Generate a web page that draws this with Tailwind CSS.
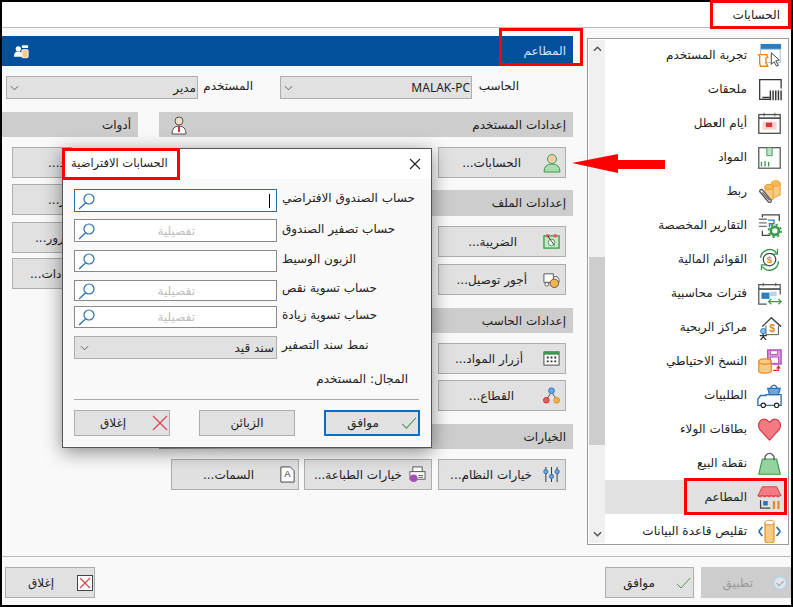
<!DOCTYPE html>
<html lang="ar" dir="rtl">
<head>
  <meta charset="UTF-8" />
  <title>الحسابات</title>
  <script src="https://cdn.jsdelivr.net/npm/@tailwindcss/browser@4"></script>
</head>
<body class="m-0 bg-black font-['DejaVu_Sans','Noto_Sans',sans-serif] text-[12px] text-[#222]">
<div class="relative w-[793px] h-[607px] overflow-hidden bg-black p-[2px]">
  <div class="relative flex flex-col h-full bg-[#f9f9f9]">

    <!-- Titlebar -->
    <div class="h-[26px] bg-white border-b border-[#bbb] flex items-center pr-[11px]">الحسابات</div>

    <div class="flex flex-1 gap-[14px] pt-[9px]">
      <!-- Sidebar -->
      <div class="w-[202px] h-[507px] mt-[1px] mr-[2px] border border-[#9a9a9a] bg-white flex p-[1px]">
        <div class="flex-1 overflow-hidden">
          <div class="flex flex-col -mt-[2px] [&>div]:shrink-0">
            <div class="h-[34px] flex items-center pr-[5px] gap-[10px]"><svg viewBox="0 0 28 28" class="w-[25px] h-[25px]"><rect x="4" y="1" width="23" height="6" fill="#2a7fc4"/><rect x="4" y="7" width="22" height="15" fill="#fff" stroke="#9bbbd8"/><path d="M2 13h9l1 3-2 1v5l2 4H4l-1-3V15z" fill="#fff" stroke="#e2882c" stroke-width="1.600"/><path d="M16 11l0 13 3-3 3 5 2-1-3-5 4-1z" fill="#fff" stroke="#333"/></svg><span>تجربة المستخدم</span></div>
            <div class="h-[34px] flex items-center pr-[5px] gap-[10px]"><svg viewBox="0 0 28 28" class="w-[25px] h-[25px]"><path d="M27 13V3H3v22h12" fill="none" stroke="#333" stroke-width="1.400"/><path d="M6 23h8M15 15v11m3-11v11m3-11v11m3-11v11m3-11v11" stroke="#333" stroke-width="1.600"/></svg><span>ملحقات</span></div>
            <div class="h-[34px] flex items-center pr-[5px] gap-[10px]"><svg viewBox="0 0 28 28" class="w-[25px] h-[25px]"><rect x="2" y="4" width="24" height="21" fill="#fff" stroke="#555" stroke-width="1.500"/><path d="M2 8h24" stroke="#555" stroke-width="2"/><path d="M8 2v4m12-4v4" stroke="#555"/><rect x="6" y="12" width="16" height="9" fill="#f4d5d5"/><rect x="10" y="13" width="7" height="5" fill="#d33"/></svg><span>أيام العطل</span></div>
            <div class="h-[34px] flex items-center pr-[5px] gap-[10px]"><svg viewBox="0 0 28 28" class="w-[25px] h-[25px]"><rect x="2" y="3" width="24" height="23" fill="#fff" stroke="#555" stroke-width="1.400"/><path d="M11 3h6v9h-6z" fill="#bfe3c3" stroke="#3b9a52"/><path d="M5 24v-5m4 5v-6m4 6v-5" stroke="#3b9a52" stroke-width="1.500"/></svg><span>المواد</span></div>
            <div class="h-[34px] flex items-center pr-[5px] gap-[10px]"><svg viewBox="0 0 28 28" class="w-[25px] h-[25px]"><path d="M17 5v17l9-4V5z" fill="#f8cb85" stroke="#e99a2c"/><ellipse cx="21" cy="5" rx="5" ry="3" fill="#f6b95c" stroke="#e99a2c"/><path d="M9 9v14h9V9z" fill="#f8cb85" stroke="#e99a2c"/><ellipse cx="13.500" cy="9" rx="5" ry="3" fill="#f6b95c" stroke="#e99a2c"/><path d="M3 14l10 12q3 1 3-2L6 12q-3-1-3 2z" fill="#fff" stroke="#555" stroke-width="1.500"/><path d="M6 15l8 9" stroke="#555" stroke-width="1.300"/></svg><span>ربط</span></div>
            <div class="h-[34px] flex items-center pr-[5px] gap-[10px]"><svg viewBox="0 0 28 28" class="w-[25px] h-[25px]"><path d="M25 9V2H6v3M6 20v5h9" fill="none" stroke="#444" stroke-width="1.400"/><path d="M2 7h9M2 11h9M2 15h9" stroke="#777" stroke-width="1.500"/><path d="M12 8h7v4h-5v4" fill="none" stroke="#2a7fc4" stroke-width="1.500"/><circle cx="20" cy="20" r="4.500" fill="none" stroke="#3d9a4e" stroke-width="3"/><circle cx="20" cy="20" r="7" fill="none" stroke="#3d9a4e" stroke-width="2" stroke-dasharray="2.500 3"/></svg><span>التقارير المخصصة</span></div>
            <div class="h-[34px] flex items-center pr-[5px] gap-[10px]"><svg viewBox="0 0 28 28" class="w-[25px] h-[25px]"><path d="M4 12a10 10 0 0 1 18-5M24 16A10 10 0 0 1 6 22" fill="none" stroke="#3d9a4e" stroke-width="1.600"/><path d="M23 2v6h-6M5 26v-6h6" fill="none" stroke="#3d9a4e" stroke-width="1.400"/><circle cx="14" cy="14" r="7" fill="#fff" stroke="#444" stroke-width="1.400"/><text x="14" y="18" text-anchor="middle" font-size="11" font-weight="bold" fill="#e2882c" font-family="Liberation Sans">$</text></svg><span>القوائم المالية</span></div>
            <div class="h-[34px] flex items-center pr-[5px] gap-[10px]"><svg viewBox="0 0 28 28" class="w-[25px] h-[25px]"><path d="M26 15V4H2v22h9" fill="none" stroke="#555" stroke-width="1.400"/><path d="M2 9h24" stroke="#555" stroke-width="2"/><path d="M7 2v4m14-4v4" stroke="#555"/><rect x="5" y="13" width="9" height="7" fill="#2a7fc4"/><rect x="14" y="12" width="8" height="5" fill="#b9d3ea"/><path d="M13 23h14m-11-3-3 3 3 3m8-6 3 3-3 3" fill="none" stroke="#3d9a4e" stroke-width="1.400"/></svg><span>فترات محاسبية</span></div>
            <div class="h-[34px] flex items-center pr-[5px] gap-[10px]"><svg viewBox="0 0 28 28" class="w-[25px] h-[25px]"><path d="M6 13L16 3l11 10" fill="none" stroke="#444" stroke-width="1.600"/><path d="M10 12v10h14V12" fill="#fff" stroke="#444"/><text x="17" y="19" text-anchor="middle" font-size="12" font-weight="bold" fill="#e2882c" font-family="Liberation Sans">$</text><circle cx="7" cy="18" r="3" fill="#8cbfe6" stroke="#2a7fc4"/><path d="M7 21v3l-3 4m3-4 3 4M3 23h8" stroke="#333" stroke-width="1.400" fill="none"/></svg><span>مراكز الربحية</span></div>
            <div class="h-[34px] flex items-center pr-[5px] gap-[10px]"><svg viewBox="0 0 28 28" class="w-[25px] h-[25px]"><path d="M12 1h15v16H12z" fill="#d99ae0" stroke="#b04dbb" stroke-width="1.500"/><rect x="15" y="2" width="8" height="4" fill="#fff" stroke="#b04dbb"/><rect x="15" y="9" width="9" height="7" fill="#fff" stroke="#b04dbb"/><path d="M2 14v11q0 2 7 2t7-2V14" fill="#f8cb85" stroke="#e08a1e" stroke-width="1.300"/><ellipse cx="9" cy="14" rx="7" ry="3" fill="#f8cb85" stroke="#e08a1e" stroke-width="1.300"/><path d="M18 24h6v-4m-2 2 2-3 2 3" fill="none" stroke="#d33" stroke-width="1.300"/></svg><span>النسخ الاحتياطي</span></div>
            <div class="h-[34px] flex items-center pr-[5px] gap-[10px]"><svg viewBox="0 0 28 28" class="w-[25px] h-[25px]"><path d="M1 25v-7l3-4h6v-1h17v12z" fill="#fff" stroke="#2a6fb0" stroke-width="1.500"/><circle cx="7" cy="25" r="2.500" fill="#fff" stroke="#222" stroke-width="1.300"/><circle cx="22" cy="25" r="2.500" fill="#fff" stroke="#222" stroke-width="1.300"/><path d="M12 6h14l-2 7H14z" fill="#6aa9e0" stroke="#2a6fb0" stroke-width="1.400"/><path d="M15 6q4-7 8 0" fill="none" stroke="#2a6fb0" stroke-width="1.400"/></svg><span>الطلبيات</span></div>
            <div class="h-[34px] flex items-center pr-[5px] gap-[10px]"><svg viewBox="0 0 28 28" class="w-[25px] h-[25px]"><path d="M14 26L3 14Q0 8 4 4q5-4 10 2 5-6 10-2 4 4 1 10z" fill="#f47a82" stroke="#cf3b45" stroke-width="1.300"/></svg><span>بطاقات الولاء</span></div>
            <div class="h-[34px] flex items-center pr-[5px] gap-[10px]"><svg viewBox="0 0 28 28" class="w-[25px] h-[25px]"><path d="M6 9h16l4 17H2z" fill="#93d39f" stroke="#3d9a4e" stroke-width="1.300"/><path d="M9 10V6q5-7 10 0v4" fill="none" stroke="#444" stroke-width="1.300"/></svg><span>نقطة البيع</span></div>
            <div class="h-[34px] flex items-center pr-[5px] gap-[10px] bg-[#e1e1e1]"><svg viewBox="0 0 28 28" class="w-[25px] h-[25px]"><path d="M6 2h16l5 10H1z" fill="#f47a82" stroke="#cf3b45"/><path d="M1 12q3 3 5 0 3 3 5 0 3 3 5 0 3 3 5 0 3 3 5 0" fill="#f47a82" stroke="#cf3b45"/><path d="M4 17v9h11" fill="none" stroke="#444" stroke-width="1.400"/><rect x="7" y="18" width="5" height="5" fill="#2a6fb0"/><path d="M19 18v9m5-9v9" stroke="#e2882c" stroke-width="2.400"/></svg><span>المطاعم</span></div>
            <div class="h-[34px] flex items-center pr-[5px] gap-[10px]"><svg viewBox="0 0 28 28" class="w-[25px] h-[25px]"><path d="M2 14l4-5m-4 5 4 5M26 14l-4-5m4 5-4 5" fill="none" stroke="#2a6fb0" stroke-width="2"/><path d="M9 4v20q0 3 5 3t5-3V4" fill="#f8cb85" stroke="#e08a1e" stroke-width="1.300"/><ellipse cx="14" cy="4" rx="5" ry="2.500" fill="#fff" stroke="#e08a1e"/></svg><span>تقليص قاعدة البيانات</span></div>
          </div>
        </div>
        <!-- Scrollbar -->
        <div class="w-[16px] bg-[#f0f0f0] flex flex-col items-center justify-between relative">
          <svg viewBox="0 0 10 6" class="w-[9px] h-[6px] mt-[6px]"><path d="M1 5l4-4 4 4" fill="none" stroke="#555" stroke-width="1.600"/></svg>
          <div class="absolute top-[217px] left-0 w-[16px] h-[188px] bg-[#cdcdcd]"></div>
          <svg viewBox="0 0 10 6" class="w-[9px] h-[6px] mb-[6px]"><path d="M1 1l4 4 4-4" fill="none" stroke="#555" stroke-width="1.600"/></svg>
        </div>
      </div>

      <!-- Main panel -->
      <div class="w-[571px] flex flex-col">
        <div class="h-[30px] bg-[#02509b] flex items-center justify-between pr-[7px] pl-[11px] -mt-[1px] text-[#cfe6fb]">
          <span>المطاعم</span>
          <svg viewBox="0 0 18 16" class="w-[16px] h-[15px]"><circle cx="6" cy="5" r="3" fill="#fff"/><path d="M1 14q0-6 5-6t5 6z" fill="#fff"/><rect x="10" y="1" width="7" height="3" fill="#fff"/><rect x="10" y="6" width="7" height="9" rx="1" fill="#f8cb85" stroke="#fff"/></svg>
        </div>

        <div class="flex items-center h-[23px] mt-[10px] pr-[54px]">
          <span class="w-[47px] mb-[3px]">الحاسب</span>
          <div class="w-[192px] h-[23px] bg-[#e1e1e1] border border-[#adadad] flex items-center justify-between pr-[1px] pl-[3px] font-['Noto_Sans']"><span>MALAK-PC</span><svg viewBox="0 0 10 6" class="w-[9px] h-[6px]"><path d="M1 1l4 4 4-4" fill="none" stroke="#555"/></svg></div>
          <span class="w-[48px] mr-[27px] mb-[3px] whitespace-nowrap">المستخدم</span>
          <div class="w-[192px] h-[23px] mr-[7px] bg-[#e1e1e1] border border-[#adadad] flex items-center justify-between pr-[1px] pl-[3px]"><span>مدير</span><svg viewBox="0 0 10 6" class="w-[9px] h-[6px]"><path d="M1 1l4 4 4-4" fill="none" stroke="#555"/></svg></div>
        </div>

        <div class="flex mt-[13px] h-[25px] gap-[21px]">
          <div class="w-[414px] bg-[#cdcdcd] flex items-center justify-between pr-[7px] pl-[11px]"><span>إعدادات المستخدم</span><svg viewBox="0 0 18 20" class="w-[18px] h-[20px]"><circle cx="9" cy="6" r="4" fill="#f6dcc6" stroke="#555"/><path d="M2 19q0-8 7-8t7 8z" fill="#fff" stroke="#555"/><path d="M9 11v6" stroke="#c33" stroke-width="2"/></svg></div>
          <div class="w-[136px] bg-[#cdcdcd] flex items-center pr-[7px]">أدوات</div>
        </div>

        <div class="flex gap-[6px] mt-[10px] pr-[7px]">
          <button class="w-[128px] h-[31px] shrink-0 bg-[#e1e1e1] border border-[#adadad] flex items-center pr-[4px]"><svg viewBox="0 0 18 20" class="w-[18px] h-[20px]"><circle cx="9" cy="6" r="4.500" fill="#f5cda8" stroke="#3d9a4e"/><path d="M1 19q0-8 8-8t8 8z" fill="#a9dcae" stroke="#3d9a4e"/></svg><span class="mr-[22px]">الحسابات...</span></button>
        </div>

        <div class="mt-[12px] h-[26px] w-[414px] bg-gradient-to-l from-[#cdcdcd] from-80% to-[#9a9a9a] flex items-center pr-[7px]">إعدادات الملف</div>
        <div class="flex flex-col gap-[7px] mt-[10px] pr-[7px]">
          <button class="w-[128px] h-[31px] bg-[#e1e1e1] border border-[#adadad] flex items-center pr-[5px]"><svg viewBox="0 0 18 18" class="w-[17px] h-[17px]"><rect x="1" y="3" width="16" height="13" fill="#c4e8c8" stroke="#3d9a4e" stroke-width="1.400"/><circle cx="9" cy="10" r="3.500" fill="#fff" stroke="#3d9a4e"/><circle cx="5" cy="3" r="2" fill="#e85a64"/><circle cx="13" cy="3" r="2" fill="#e85a64"/><path d="M5 3l7 10" stroke="#333"/></svg><span class="mr-[26px]">الضريبة...</span></button>
          <button class="w-[128px] h-[31px] bg-[#e1e1e1] border border-[#adadad] flex items-center pr-[5px]"><svg viewBox="0 0 18 18" class="w-[17px] h-[17px]"><path d="M1 3h10v9H1zM11 6h4l2 3v3h-6" fill="#fff" stroke="#555"/><circle cx="12" cy="13" r="4.500" fill="#f8b34a" stroke="#555"/><circle cx="4" cy="14" r="2" fill="#fff" stroke="#555"/></svg><span class="mr-[16px]">أجور توصيل...</span></button>
        </div>

        <div class="mt-[13px] h-[25px] w-[414px] bg-gradient-to-l from-[#cdcdcd] from-80% to-[#9a9a9a] flex items-center pr-[7px]">إعدادات الحاسب</div>
        <div class="flex flex-col gap-[6px] mt-[10px] pr-[7px]">
          <button class="w-[128px] h-[31px] bg-[#e1e1e1] border border-[#adadad] flex items-center pr-[5px]"><svg viewBox="0 0 18 18" class="w-[17px] h-[17px]"><rect x="1" y="2" width="16" height="14" fill="#fff" stroke="#444"/><rect x="1" y="2" width="16" height="3" fill="#3d9a4e"/><path d="M4 8h2m2 0h2m2 0h2M4 12h2m2 0h2m2 0h2" stroke="#333" stroke-width="2"/></svg><span class="mr-[20px]">أزرار المواد...</span></button>
          <button class="w-[128px] h-[31px] bg-[#e1e1e1] border border-[#adadad] flex items-center pr-[5px]"><svg viewBox="0 0 18 18" class="w-[17px] h-[17px]"><path d="M9 5L4 13m5-8 5 8" stroke="#555"/><circle cx="9" cy="4" r="3" fill="#6aa9e0" stroke="#2a6fb0"/><circle cx="3.500" cy="14" r="3" fill="#e85a64" stroke="#c33"/><circle cx="14.500" cy="14" r="3" fill="#f8b34a" stroke="#d48a1e"/></svg><span class="mr-[29px]">القطاع...</span></button>
        </div>

        <div class="mt-[13px] h-[25px] w-[414px] bg-gradient-to-l from-[#cdcdcd] from-80% to-[#9a9a9a] flex items-center pr-[7px]">الخيارات</div>
        <div class="flex gap-[6px] mt-[10px] pr-[7px]">
          <button class="w-[128px] h-[31px] bg-[#e1e1e1] border border-[#adadad] flex items-center pr-[5px]"><svg viewBox="0 0 18 18" class="w-[17px] h-[17px]"><path d="M3 1v16M9 1v16M15 1v16" stroke="#333"/><circle cx="3" cy="6" r="2.200" fill="#6aa9e0" stroke="#2a6fb0"/><circle cx="9" cy="11" r="2.200" fill="#6aa9e0" stroke="#2a6fb0"/><circle cx="15" cy="6" r="2.200" fill="#6aa9e0" stroke="#2a6fb0"/></svg><span class="mr-[11px]">خيارات النظام...</span></button>
          <button class="w-[128px] h-[31px] bg-[#e1e1e1] border border-[#adadad] flex items-center pr-[5px]"><svg viewBox="0 0 18 18" class="w-[17px] h-[17px]"><rect x="4" y="1" width="10" height="5" fill="#fff" stroke="#555"/><rect x="1" y="6" width="16" height="8" fill="#fff" stroke="#555"/><circle cx="5" cy="13" r="4" fill="#a44fb5"/><path d="M10 10h5m-5 2h5" stroke="#555"/></svg><span class="mr-[7px]">خيارات الطباعة...</span></button>
          <button class="w-[128px] h-[31px] -mr-[1px] bg-[#e1e1e1] border border-[#adadad] flex items-center pr-[2px]"><svg viewBox="0 0 18 18" class="w-[17px] h-[17px]"><path d="M2 1h10l4 4v12H2z" fill="#fff" stroke="#444"/><text x="9" y="12" text-anchor="middle" font-size="10" fill="#333" font-family="Liberation Sans">A</text></svg><span class="mr-[25px]">السمات...</span></button>
        </div>
      </div>
    </div>

    <!-- Footer -->
    <div class="h-[49px] pt-[3px] border-t border-[#bbb] flex items-center gap-[7px] pl-[3px]">
      <button class="w-[90px] h-[31px] bg-[#cdcdcd] text-[#999] flex items-center pr-[3px] gap-[19px]"><svg viewBox="0 0 18 18" class="w-[16px] h-[16px]"><circle cx="9" cy="9" r="7.500" fill="#dfe6ec" stroke="#bcd0e0" stroke-width="2"/><path d="M5 9l3 3 5-5" fill="none" stroke="#aab" stroke-width="1.400"/></svg><span>تطبيق</span></button>
      <button class="w-[89px] h-[31px] bg-[#e1e1e1] border border-[#adadad] flex items-center pr-[2px] gap-[21px]"><svg viewBox="0 0 18 14" class="w-[15px] h-[12px]"><path d="M1 8l5 5L17 1" fill="none" stroke="#4d9a5a" stroke-width="1.200"/></svg><span>موافق</span></button>
      <button class="w-[90px] h-[31px] bg-[#e1e1e1] border border-[#adadad] flex items-center pr-[1px] gap-[23px] mr-auto"><svg viewBox="0 0 16 16" class="w-[16px] h-[16px]"><rect x="0.500" y="0.500" width="15" height="15" fill="#fff" stroke="#444"/><path d="M3 3l10 10M13 3L3 13" stroke="#d9434e" stroke-width="1.200"/></svg><span>إغلاق</span></button>
    </div>
  </div>

  <!-- Partially hidden left-column buttons -->
  <div class="absolute left-[12px] top-[147px] flex flex-col">
    <button class="w-[60px] h-[31px] bg-[#e1e1e1] border border-[#adadad] text-left pl-[35px]">د...</button>
    <button class="w-[60px] h-[31px] mt-[6px] bg-[#e1e1e1] border border-[#adadad] text-left pl-[35px]">ر...</button>
    <button class="w-[60px] h-[31px] mt-[7px] bg-[#e1e1e1] border border-[#adadad] text-left pl-[22px]">رور...</button>
    <button class="w-[60px] h-[31px] mt-[5px] bg-[#e1e1e1] border border-[#adadad] text-left pl-[17px]">ادات...</button>
  </div>

  <!-- Dialog -->
  <div class="absolute left-[62px] top-[148px] w-[370px] h-[300px] bg-[#f9f9f9] border border-[#555] shadow-[0_4px_18px_rgba(0,0,0,0.45)] flex flex-col">
    <div class="h-[30px] bg-white flex items-center justify-between pr-[10px] pl-[8px] shrink-0">
      <svg viewBox="0 0 12 12" class="w-[12px] h-[12px]"><path d="M1 1l10 10M11 1L1 11" stroke="#222" stroke-width="1.100"/></svg>
      <span class="text-[11.5px]">الحسابات الافتراضية</span>
    </div>
    <div class="flex flex-col pt-[10px] pr-[10px] pl-[11px]">
      <div class="flex items-center gap-[5px] h-[23px]">
        <span class="flex-1 text-left whitespace-nowrap mb-[5px]">حساب الصندوق الافتراضي</span>
        <div class="w-[203px] h-[23px] bg-white border border-[#2a6fa8] flex items-center justify-between pr-[6px] pl-[3px]"><span class="w-[1px] h-[14px] bg-black"></span><svg viewBox="0 0 18 18" class="w-[18px] h-[18px]"><circle cx="11" cy="7" r="5" fill="none" stroke="#2a6fb0" stroke-width="1.200"/><path d="M7.500 11L1 17" stroke="#2a6fb0" stroke-width="1.200"/></svg></div>
      </div>
      <div class="flex items-center gap-[5px] h-[23px] mt-[7px]">
        <span class="flex-1 text-left whitespace-nowrap mb-[4px]">حساب تصفير الصندوق</span>
        <div class="w-[203px] h-[23px] bg-white border border-[#8a8a8a] flex items-center justify-end relative pl-[3px]"><span class="absolute right-[81px] text-[#bdbdbd]">تفصيلية</span><svg viewBox="0 0 18 18" class="w-[18px] h-[18px]"><circle cx="11" cy="7" r="5" fill="none" stroke="#2a6fb0" stroke-width="1.200"/><path d="M7.500 11L1 17" stroke="#2a6fb0" stroke-width="1.200"/></svg></div>
      </div>
      <div class="flex items-center gap-[5px] h-[22px] mt-[8px]">
        <span class="flex-1 text-left whitespace-nowrap mb-[4px]">الزبون الوسيط</span>
        <div class="w-[203px] h-[22px] bg-white border border-[#8a8a8a] flex items-center justify-end pl-[3px]"><svg viewBox="0 0 18 18" class="w-[18px] h-[18px]"><circle cx="11" cy="7" r="5" fill="none" stroke="#2a6fb0" stroke-width="1.200"/><path d="M7.500 11L1 17" stroke="#2a6fb0" stroke-width="1.200"/></svg></div>
      </div>
      <div class="flex items-center gap-[5px] h-[21px] mt-[8px]">
        <span class="flex-1 text-left whitespace-nowrap mb-[5px]">حساب تسوية نقص</span>
        <div class="w-[203px] h-[21px] bg-white border border-[#8a8a8a] flex items-center justify-end relative pl-[3px]"><span class="absolute right-[81px] text-[#bdbdbd]">تفصيلية</span><svg viewBox="0 0 18 18" class="w-[18px] h-[18px]"><circle cx="11" cy="7" r="5" fill="none" stroke="#2a6fb0" stroke-width="1.200"/><path d="M7.500 11L1 17" stroke="#2a6fb0" stroke-width="1.200"/></svg></div>
      </div>
      <div class="flex items-center gap-[5px] h-[22px] mt-[5px]">
        <span class="flex-1 text-left whitespace-nowrap mb-[5px]">حساب تسوية زيادة</span>
        <div class="w-[203px] h-[22px] bg-white border border-[#8a8a8a] flex items-center justify-end relative pl-[3px]"><span class="absolute right-[81px] text-[#bdbdbd]">تفصيلية</span><svg viewBox="0 0 18 18" class="w-[18px] h-[18px]"><circle cx="11" cy="7" r="5" fill="none" stroke="#2a6fb0" stroke-width="1.200"/><path d="M7.500 11L1 17" stroke="#2a6fb0" stroke-width="1.200"/></svg></div>
      </div>
      <div class="flex items-center gap-[5px] h-[23px] mt-[8px]">
        <span class="flex-1 text-left whitespace-nowrap mb-[5px]">نمط سند التصفير</span>
        <div class="w-[203px] h-[23px] bg-[#e1e1e1] border border-[#adadad] flex items-center justify-between pr-[2px] pl-[5px]"><span>سند قيد</span><svg viewBox="0 0 10 6" class="w-[9px] h-[6px]"><path d="M1 1l4 4 4-4" fill="none" stroke="#555"/></svg></div>
      </div>
      <div class="mt-[11px] pr-[13px] h-[18px] leading-[18px]">المجال: المستخدم</div>
      <div class="h-[1px] bg-[#aaa] mt-[11px] w-[345px] self-end"></div>
    </div>
    <div class="flex justify-between px-[11px] mt-[10px]">
      <button class="w-[96px] h-[26px] bg-[#e1e1e1] border-2 border-[#0a6cc4] flex items-center pr-[1px]"><svg viewBox="0 0 18 14" class="w-[16px] h-[12px]"><path d="M1 8l5 5L17 1" fill="none" stroke="#4d9a5a" stroke-width="1.200"/></svg><span class="mr-[22px]">موافق</span></button>
      <button class="w-[96px] h-[26px] bg-[#e1e1e1] border border-[#adadad]">الزبائن</button>
      <button class="w-[96px] h-[26px] bg-[#e1e1e1] border border-[#adadad] flex items-center pr-[1px]"><svg viewBox="0 0 16 16" class="w-[16px] h-[16px]"><path d="M1 1l14 14M15 1L1 15" stroke="#d9434e" stroke-width="1.200"/></svg><span class="mr-[26px]">إغلاق</span></button>
    </div>
  </div>

  <!-- Red annotations -->
  <div class="absolute left-[710px] top-0 w-[81px] h-[29px] border-[3px] border-[#f00]"></div>
  <div class="absolute left-[499px] top-[28px] w-[84px] h-[38px] border-[3px] border-[#f00]"></div>
  <div class="absolute left-[62px] top-[148px] w-[118px] h-[32px] border-[3px] border-[#f00]"></div>
  <div class="absolute left-[684px] top-[478px] w-[103px] h-[37px] border-[3px] border-[#f00]"></div>
  <svg class="absolute left-[572px] top-[154px] w-[93px] h-[19px]" viewBox="0 0 93 19"><path d="M0 9L46 0v6h47v9H46v4z" fill="#f00"/></svg>
</div>
</body>
</html>
